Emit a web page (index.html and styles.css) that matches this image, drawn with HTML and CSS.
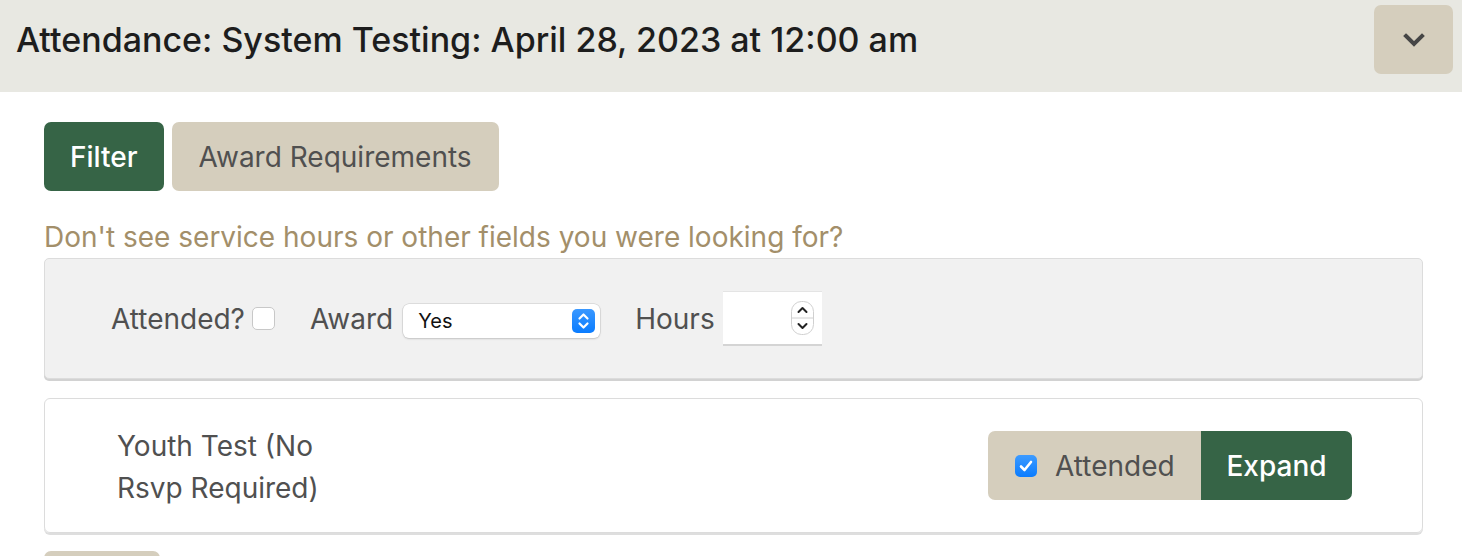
FILE: index.html
```html
<!DOCTYPE html>
<html lang="en">
<head>
  <meta charset="UTF-8">
  <title>Attendance</title>
  <link rel="stylesheet" href="styles.css">
</head>
<body>
  <div class="header">
    <h1 class="title">Attendance: System Testing: April 28, 2023 at 12:00 am</h1>
    <button class="toggle" aria-label="Collapse">
      <svg width="24" height="16" viewBox="0 0 24 16"><path d="M4 4 L12 12 L20 4" fill="none" stroke="#464646" stroke-width="4" stroke-linecap="square"/></svg>
    </button>
  </div>

  <div class="main">
    <div class="actions">
      <button class="btn btn-green">Filter</button>
      <button class="btn btn-tan">Award Requirements</button>
    </div>

    <p class="hint">Don't see service hours or other fields you were looking for?</p>

    <div class="panel">
      <label class="field field-check">Attended?<span class="check"></span></label>
      <label class="field">Award
        <span class="select-wrap">
          <select class="select"><option>Yes</option><option>No</option></select>
          <span class="select-arrow">
            <svg width="23" height="24" viewBox="0 0 23 24"><path d="M7.5 9.5 L11.5 5.5 L15.5 9.5 M7.5 14.5 L11.5 18.5 L15.5 14.5" fill="none" stroke="#fff" stroke-width="2.2" stroke-linecap="round" stroke-linejoin="round"/></svg>
          </span>
        </span>
      </label>
      <label class="field field-hours">Hours
        <span class="number-wrap">
          <input class="number" type="text">
          <span class="spinner">
            <svg width="23" height="34" viewBox="0 0 23 34"><rect x="0.5" y="0.5" width="22" height="33" rx="10" fill="#fff" stroke="#d0d0d0"/><line x1="1" y1="17" x2="22" y2="17" stroke="#d0d0d0"/><path d="M7.5 11 L11.5 7 L15.5 11 M7.5 23 L11.5 27 L15.5 23" fill="none" stroke="#222" stroke-width="2" stroke-linecap="round" stroke-linejoin="round"/></svg>
          </span>
        </span>
      </label>
    </div>

    <div class="card">
      <div class="name">Youth Test (No Rsvp Required)</div>
      <div class="group">
        <label class="group-check">
          <span class="check checked">
            <svg width="22" height="22" viewBox="0 0 22 22"><path d="M6 11.5 L9.5 15 L16 7" fill="none" stroke="#fff" stroke-width="2.6" stroke-linecap="round" stroke-linejoin="round"/></svg>
          </span>
          Attended
        </label>
        <button class="group-btn">Expand</button>
      </div>
    </div>

    <div class="actions">
      <button class="btn btn-tan btn-small">&nbsp;</button>
    </div>
  </div>
</body>
</html>
```

FILE: styles.css
```css
body {
  margin: 0;
  font-family: Inter, "Liberation Sans", sans-serif;
  color: #4f4f4f;
  background: #fff;
}
.header {
  background-color: #e8e8e2;
  display: flex;
  align-items: center;
  justify-content: space-between;
  padding: 5px 9px 18px 16px;
}
.title {
  margin: 0;
  font-size: 34px;
  font-weight: 450;
  color: #1d1d1d;
}
.toggle {
  width: 79px;
  height: 69px;
  border: none;
  border-radius: 7px;
  background-color: #d5cebd;
  display: flex;
  align-items: center;
  justify-content: center;
  padding: 0;
}
.main {
  padding: 30px 39px 0 44px;
}
.actions {
  display: flex;
  gap: 8px;
}
.btn {
  height: 69px;
  border: none;
  border-radius: 7px;
  font-family: inherit;
  font-size: 28px;
  padding: 0 26px;
}
.btn-green {
  background-color: #366446;
  color: #fff;
  font-weight: 500;
}
.btn-tan {
  background-color: #d5cebd;
  color: #505050;
  padding: 0 27px;
}
.btn-small {
  width: 116px;
  margin-top: 18px;
}
.hint {
  margin: 30px 0 5px 0;
  font-size: 28px;
  line-height: 32px;
  color: #a38f6a;
}
.panel {
  background-color: #f1f1f1;
  border: 1px solid #dcdcdc;
  border-radius: 5px;
  box-shadow: 0 2px 0 #d2d2d2;
  height: 119px;
  display: flex;
  align-items: center;
  padding-left: 66px;
  gap: 35px;
}
.field {
  display: flex;
  align-items: center;
  gap: 10px;
  font-size: 28px;
  color: #505050;
}
.field-check {
  gap: 7px;
}
.field-hours {
  gap: 8px;
}
.check {
  width: 23px;
  height: 23px;
  box-sizing: border-box;
  border: 1px solid #c8c8c8;
  border-radius: 5px;
  background: #fff;
  display: inline-flex;
}
.check.checked {
  width: 22px;
  height: 22px;
  border: none;
  background: linear-gradient(#3d9bff, #0a7cff);
}
.select-wrap {
  position: relative;
  display: inline-block;
  margin-top: 4px;
}
.select {
  appearance: none;
  display: block;
  width: 197px;
  height: 34px;
  border: none;
  border-radius: 6px;
  background: #fff;
  box-shadow: 0 0 0 0.5px #c9c9c9, 0 1px 2px rgba(0,0,0,0.18);
  font-family: inherit;
  font-size: 20px;
  color: #111;
  padding: 0 0 0 15px;
}
.select-arrow {
  position: absolute;
  right: 5px;
  top: 5px;
  width: 23px;
  height: 24px;
  border-radius: 5px;
  background: linear-gradient(#3a98ff, #0a7cff);
  display: flex;
  pointer-events: none;
}
.number-wrap {
  position: relative;
  display: inline-block;
}
.number {
  width: 99px;
  height: 55px;
  box-sizing: border-box;
  border: none;
  border-top: 1px solid #e4e4e4;
  border-bottom: 2px solid #d4d4d4;
  background: #fff;
  font-size: 20px;
  display: block;
}
.spinner {
  position: absolute;
  right: 8px;
  top: 10px;
  display: flex;
  pointer-events: none;
}
.card {
  margin-top: 19px;
  border: 1px solid #dcdcdc;
  border-radius: 6px;
  box-shadow: 0 2px 0 #dedede;
  height: 133px;
  display: flex;
  align-items: center;
  justify-content: space-between;
  padding: 0 70px 0 72px;
}
.name {
  width: 215px;
  font-size: 28px;
  line-height: 42px;
  color: #505050;
  margin-top: 2px;
}
.group {
  display: flex;
  height: 69px;
  border-radius: 7px;
  overflow: hidden;
  margin-top: 0;
}
.group-check {
  width: 213px;
  box-sizing: border-box;
  background-color: #d5cebd;
  display: flex;
  align-items: center;
  gap: 18px;
  padding-left: 27px;
  font-size: 28px;
  color: #505050;
}
.group-btn {
  width: 151px;
  border: none;
  background-color: #366446;
  color: #fff;
  font-family: inherit;
  font-size: 28px;
  font-weight: 500;
  padding: 0;
}
```
